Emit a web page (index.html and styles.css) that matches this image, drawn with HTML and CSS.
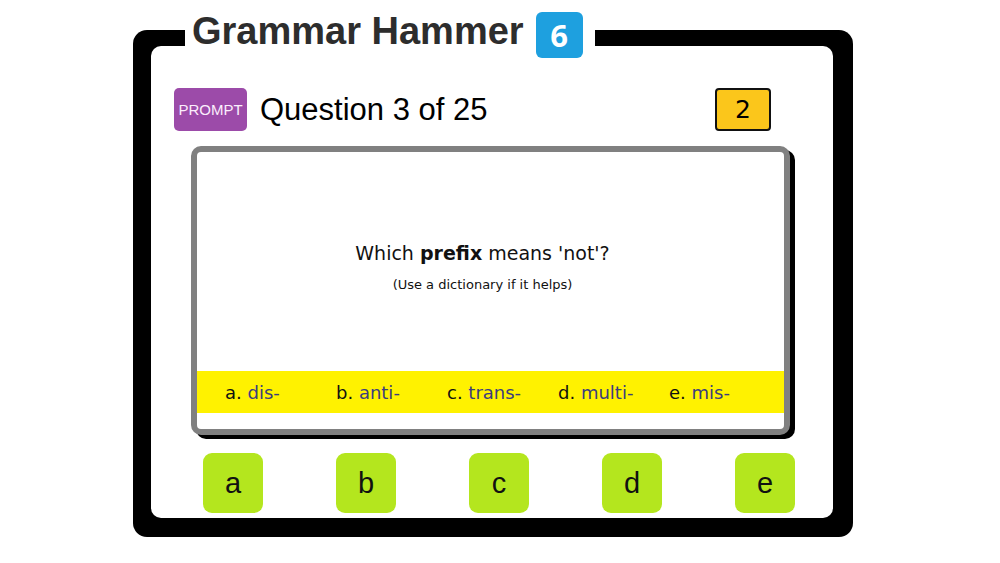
FILE: index.html
```html
<!DOCTYPE html>
<html lang="en">

<head>
    <meta charset="UTF-8" />
    <meta name="viewport" content="width=device-width, initial-scale=1.0" />
    <title>Grammar Hammer</title>
    <link rel="stylesheet" href="styles.css">
</head>

<body>
    <div class="frame">
        <div class="title">
            <h1>Grammar Hammer</h1>
            <span class="level">6</span>
        </div>

        <div class="board">
            <div class="top-row">
                <button class="prompt">PROMPT</button>
                <h2>Question 3 of 25</h2>
                <div class="score">2</div>
            </div>

            <div class="card">
                <div class="question">
                    <p class="ask">Which <b>prefix</b> means 'not'?</p>
                    <p class="hint">(Use a dictionary if it helps)</p>
                </div>
                <div class="options">
                    <span><b>a.</b> dis-</span>
                    <span><b>b.</b> anti-</span>
                    <span><b>c.</b> trans-</span>
                    <span><b>d.</b> multi-</span>
                    <span><b>e.</b> mis-</span>
                </div>
            </div>

            <div class="answers">
                <button>a</button>
                <button>b</button>
                <button>c</button>
                <button>d</button>
                <button>e</button>
            </div>
        </div>
    </div>
</body>

</html>
```

FILE: styles.css
```css
* {
    box-sizing: border-box;
}

html,
body {
    margin: 0;
    padding: 0;
    background: #fff;
    font-family: 'Liberation Sans', Arial, sans-serif;
}

.frame {
    position: relative;
    width: 720px;
    height: 507px;
    margin: 30px 0 0 133px;
    padding: 16px 20px 19px 18px;
    border-radius: 14px;
    background: #000;
}

.board {
    height: 100%;
    border-radius: 10px;
    background: #fff;
    padding-top: 42px;
}

/* title sits over the top border */
.title {
    position: absolute;
    top: -18px;
    left: 52px;
    width: 410px;
    height: 46px;
    display: flex;
    align-items: flex-start;
    gap: 12px;
    padding-left: 7px;
    background: #fff;
}

h1 {
    margin: 0;
    font-size: 38px;
    line-height: 1;
    font-weight: 700;
    color: #2d2d2d;
}

.level {
    width: 47px;
    height: 46px;
    border-radius: 6px;
    background: #1ea0df;
    color: #fff;
    font-family: 'Open Sans', sans-serif;
    font-weight: 700;
    font-size: 31px;
    line-height: 46px;
    text-align: center;
}

.top-row {
    display: flex;
    align-items: center;
    height: 43px;
    padding: 0 62px 0 23px;
}

.prompt {
    width: 73px;
    height: 43px;
    padding: 0;
    border: none;
    border-radius: 5px;
    background: #9c4ba9;
    color: #fbeefc;
    font-family: 'Liberation Sans', Arial, sans-serif;
    font-size: 15px;
}

h2 {
    margin: 0 0 0 13px;
    font-size: 31px;
    font-weight: 400;
    color: #000;
    flex: 1;
}

.score {
    width: 56px;
    height: 43px;
    border: 2px solid #111;
    border-radius: 4px;
    background: #fbc61b;
    font-family: 'Comic Sans MS', 'DejaVu Sans', sans-serif;
    font-size: 25px;
    line-height: 39px;
    text-align: center;
}

.card {
    width: 599px;
    height: 289px;
    margin: 15px 0 0 40px;
    border: 6px solid #808080;
    border-radius: 10px;
    box-shadow: 5px 4px 0 #000;
    background: #fff;
    font-family: 'Comic Sans MS', 'DejaVu Sans', sans-serif;
    display: flex;
    flex-direction: column;
}

.question {
    height: 219px;
    padding: 87px 16px 0 0;
    text-align: center;
}

.question p {
    margin: 0;
}

.ask {
    font-size: 19px;
    line-height: 28px;
    color: #111;
}

.hint {
    margin-top: 9px !important;
    font-size: 13px;
    line-height: 18px;
    color: #111;
}

.options {
    height: 42px;
    background: #fff200;
    display: grid;
    grid-template-columns: repeat(5, 111px);
    padding-left: 28px;
    align-items: center;
    font-size: 18px;
    color: #3c3d7e;
}

.options b {
    font-weight: 400;
    color: #111;
}

.answers {
    display: flex;
    gap: 73px;
    margin-top: 18px;
    padding-left: 52px;
}

.answers button {
    width: 60px;
    height: 60px;
    padding: 0;
    border: none;
    border-radius: 9px;
    background: #b4e61e;
    color: #111;
    font-family: 'Liberation Sans', Arial, sans-serif;
    font-size: 29px;
}
```
